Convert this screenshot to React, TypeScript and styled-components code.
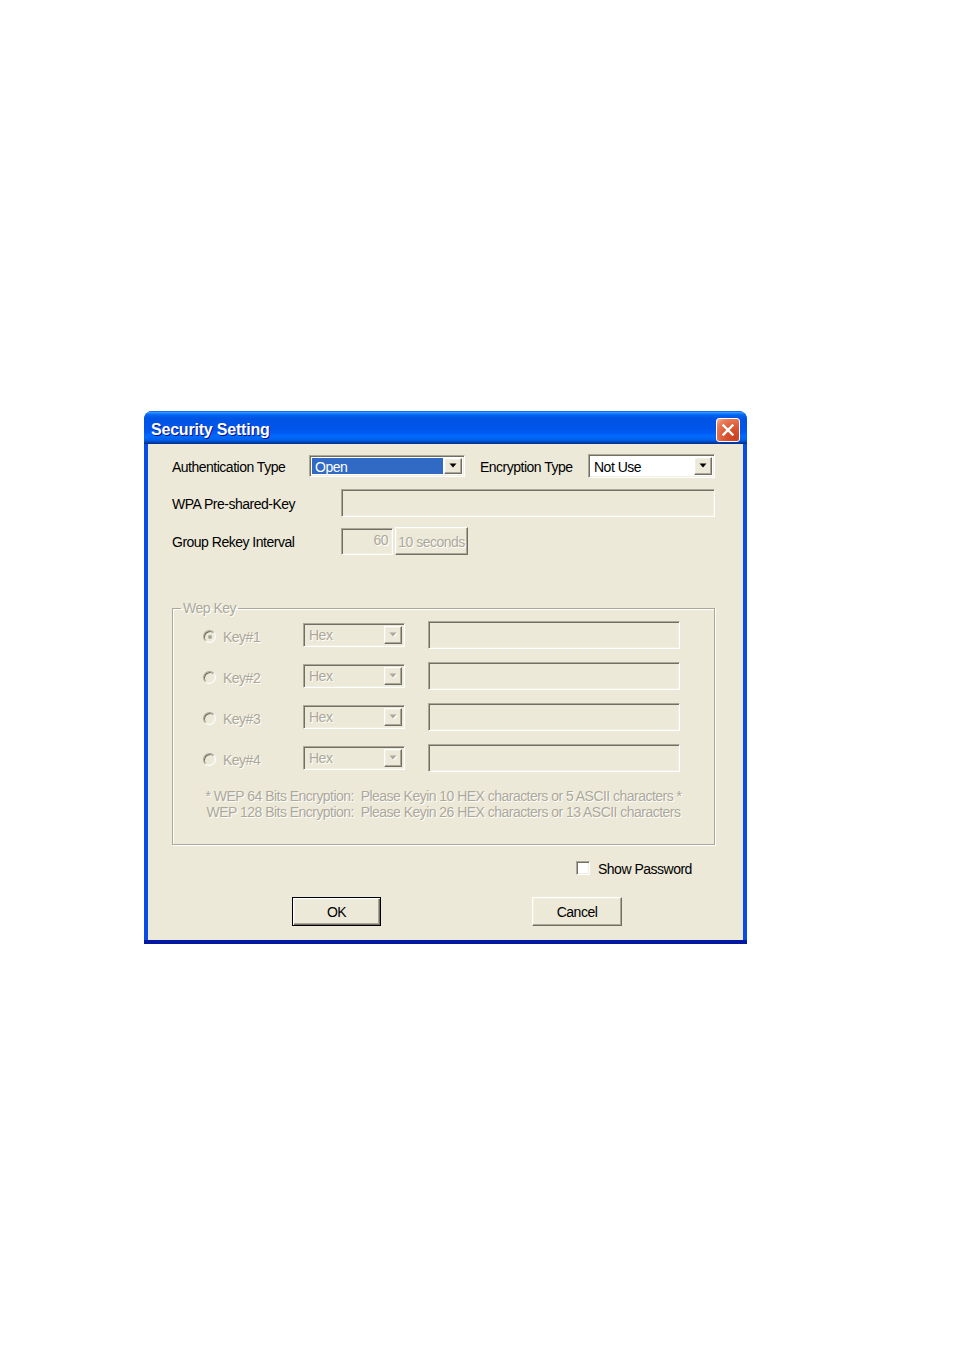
import styled, { createGlobalStyle } from "styled-components";

const GlobalStyle = createGlobalStyle`
  html, body {
    margin: 0;
    padding: 0;
    background: #ffffff;
  }
  body {
    font-family: "Liberation Sans", Arial, sans-serif;
  }
  * {
    box-sizing: border-box;
  }
`;

const sunken = `
  border: 1px solid;
  border-color: #aca899 #ffffff #ffffff #aca899;
  box-shadow: inset 1px 1px 0 #716f64, inset -1px -1px 0 #f1efe2;
`;

const raised = `
  border: 1px solid;
  border-color: #ffffff #716f64 #716f64 #ffffff;
  box-shadow: inset -1px -1px 0 #aca899, inset 1px 1px 0 #f1efe2;
`;

const Page = styled.div`
  padding: 411px 0 0 144px;
  height: 1350px;
`;

const Window = styled.div`
  width: 603px;
  height: 533px;
  border-radius: 8px 8px 0 0;
  padding: 0 4px 4px 4px;
  background: linear-gradient(
    to bottom,
    #0a4de2 calc(100% - 4px),
    #0019a0 calc(100% - 4px)
  );
  display: flex;
  flex-direction: column;
  overflow: hidden;
`;

const TitleBar = styled.div`
  height: 34px;
  margin: 0 -4px;
  padding: 0 7px 0 7px;
  display: flex;
  align-items: center;
  justify-content: space-between;
  border-radius: 8px 8px 0 0;
  background: linear-gradient(
    to bottom,
    #0058ee 0%,
    #3593ff 4%,
    #288eff 6%,
    #127dff 8%,
    #036ffc 10%,
    #0262ee 14%,
    #0057e5 20%,
    #0054e3 24%,
    #0055eb 56%,
    #005bf5 66%,
    #026afe 76%,
    #0062ef 86%,
    #0052d6 92%,
    #0040ab 94%,
    #003092 100%
  );
`;

const Title = styled.span`
  color: #ffffff;
  font-weight: bold;
  font-size: 16px;
  letter-spacing: -0.2px;
  text-shadow: 1px 1px 0 #0f1089;
  padding-top: 5px;
`;

const CloseButton = styled.div`
  width: 24px;
  height: 24px;
  margin-top: 4px;
  border: 1px solid #ffffff;
  border-radius: 3px;
  background: radial-gradient(
    circle at 80% 85%,
    #c8401f 0%,
    #dc5a36 45%,
    #e8805e 80%,
    #f6c2ae 100%
  );
  display: flex;
  align-items: center;
  justify-content: center;
`;

const Body = styled.div`
  flex: 1;
  background: #ece9d8;
  padding: 11px 28px 14px 24px;
  color: #000000;
  font-size: 14px;
  letter-spacing: -0.5px;
`;

const Row = styled.div<{ $gap: number; $h: number }>`
  display: flex;
  align-items: center;
  height: ${(p) => p.$h}px;
  margin-top: ${(p) => p.$gap}px;
`;

const Label = styled.span<{ $w: number; $ml?: number }>`
  width: ${(p) => p.$w}px;
  margin-left: ${(p) => p.$ml ?? 0}px;
  padding-top: 2px;
  flex-shrink: 0;
  white-space: nowrap;
`;

const SelectBox = styled.div<{ $w: number; $h: number; $bg: string }>`
  ${sunken}
  width: ${(p) => p.$w}px;
  height: ${(p) => p.$h}px;
  background: ${(p) => p.$bg};
  padding: 2px;
  display: flex;
  align-items: stretch;
  flex-shrink: 0;
`;

const SelectValue = styled.div<{ $selected?: boolean; $disabled?: boolean }>`
  flex: 1;
  display: flex;
  align-items: center;
  padding: 1px 0 0 3px;
  margin-right: 1px;
  white-space: nowrap;
  background: ${(p) => (p.$selected ? "#316ac5" : "transparent")};
  color: ${(p) => (p.$selected ? "#ffffff" : p.$disabled ? "#aca899" : "#000000")};
  text-shadow: ${(p) => (p.$disabled ? "1px 1px 0 #ffffff" : "none")};
`;

const ArrowButton = styled.div`
  ${raised}
  width: 18px;
  background: #ece9d8;
  display: flex;
  align-items: center;
  justify-content: center;
`;

const TextField = styled.div<{ $w: number; $h: number; $ml?: number }>`
  ${sunken}
  width: ${(p) => p.$w}px;
  height: ${(p) => p.$h}px;
  margin-left: ${(p) => p.$ml ?? 0}px;
  background: #ece9d8;
  flex-shrink: 0;
  color: #aca899;
  text-shadow: 1px 1px 0 #ffffff;
  text-align: right;
  padding: 3px 4px 0 0;
`;

const Button = styled.div<{ $w: number; $h: number; $default?: boolean; $disabled?: boolean; $ml?: number }>`
  width: ${(p) => p.$w}px;
  height: ${(p) => p.$h}px;
  margin-left: ${(p) => p.$ml ?? 0}px;
  padding-top: 1px;
  flex-shrink: 0;
  display: flex;
  align-items: center;
  justify-content: center;
  white-space: nowrap;
  background: #ece9d8;
  color: ${(p) => (p.$disabled ? "#aca899" : "#000000")};
  text-shadow: ${(p) => (p.$disabled ? "1px 1px 0 #ffffff" : "none")};
  ${(p) =>
    p.$default
      ? `border: 1px solid #000000;
         box-shadow: inset 1px 1px 0 #ffffff, inset -1px -1px 0 #716f64, inset -2px -2px 0 #aca899, inset 2px 2px 0 #f1efe2;`
      : `border: 1px solid;
         border-color: #ffffff #716f64 #716f64 #ffffff;
         box-shadow: inset -1px -1px 0 #aca899, inset 1px 1px 0 #f1efe2;`}
`;

const GroupBox = styled.fieldset`
  width: 543px;
  margin: 45px 0 0 0;
  padding: 0 0 24px 0;
  border: 1px solid #aca899;
  box-shadow: inset 1px 1px 0 #ffffff, 1px 1px 0 #ffffff;
  min-width: 0;
`;

const Legend = styled.legend`
  margin-left: 8px;
  padding: 0 2px;
  line-height: 16px;
  color: #aca899;
  text-shadow: 1px 1px 0 #ffffff;
`;

const KeyList = styled.div`
  margin-top: -2px;
`;

const KeyRow = styled.div`
  height: 41px;
  display: flex;
  align-items: center;
  padding-left: 30px;
`;

const Radio = styled.div<{ $checked?: boolean }>`
  width: 13px;
  height: 13px;
  margin-top: 4px;
  border-radius: 50%;
  border: 1px solid;
  border-color: #aca899 #ffffff #ffffff #aca899;
  box-shadow: inset 1px 1px 0 #716f64, inset -1px -1px 0 #f1efe2;
  background: #ece9d8;
  flex-shrink: 0;
  display: flex;
  align-items: center;
  justify-content: center;
  &::after {
    content: "";
    display: ${(p) => (p.$checked ? "block" : "none")};
    width: 4px;
    height: 4px;
    border-radius: 50%;
    background: #aca899;
  }
`;

const KeyLabel = styled.span`
  width: 80px;
  margin-left: 7px;
  margin-top: 4px;
  color: #aca899;
  text-shadow: 1px 1px 0 #ffffff;
`;

const Notes = styled.div`
  margin-top: 10px;
  text-align: center;
  line-height: 16px;
  font-size: 14px;
  letter-spacing: -0.53px;
  color: #aca899;
  text-shadow: 1px 1px 0 #ffffff;
  white-space: pre;
`;

const CheckRow = styled.div`
  margin-top: 16px;
  height: 14px;
  display: flex;
  align-items: center;
  padding-left: 404px;
  gap: 8px;
`;

const CheckBox = styled.div`
  ${sunken}
  width: 14px;
  height: 14px;
  background: #ffffff;
`;

const CheckText = styled.span`
  padding-top: 2px;
`;

const ButtonRow = styled.div`
  margin-top: 22px;
  display: flex;
  padding-left: 120px;
  gap: 151px;
`;

function Arrow({ disabled }: { disabled?: boolean }) {
  return (
    <svg width="9" height="6" viewBox="0 0 9 6">
      {disabled && <path d="M1.5 1.5h7L5 5.5z" fill="#ffffff" />}
      <path d="M0.5 0.5h7L4 4.5z" fill={disabled ? "#aca899" : "#000000"} />
    </svg>
  );
}

function CloseIcon() {
  return (
    <svg width="14" height="14" viewBox="0 0 14 14">
      <path
        d="M2.5 2.5L11.5 11.5M11.5 2.5L2.5 11.5"
        stroke="#ffffff"
        strokeWidth="2.4"
        strokeLinecap="square"
      />
    </svg>
  );
}

const keys = ["Key#1", "Key#2", "Key#3", "Key#4"];

export default function App() {
  return (
    <>
      <GlobalStyle />
      <Page>
        <Window>
          <TitleBar>
            <Title>Security Setting</Title>
            <CloseButton>
              <CloseIcon />
            </CloseButton>
          </TitleBar>
          <Body>
            <Row $gap={0} $h={22}>
              <Label $w={137}>Authentication Type</Label>
              <SelectBox $w={156} $h={22} $bg="#ffffff">
                <SelectValue $selected>Open</SelectValue>
                <ArrowButton>
                  <Arrow />
                </ArrowButton>
              </SelectBox>
              <Label $w={108} $ml={15}>Encryption Type</Label>
              <SelectBox $w={127} $h={24} $bg="#ffffff">
                <SelectValue>Not Use</SelectValue>
                <ArrowButton>
                  <Arrow />
                </ArrowButton>
              </SelectBox>
            </Row>
            <Row $gap={12} $h={28}>
              <Label $w={169}>WPA Pre-shared-Key</Label>
              <TextField $w={374} $h={28} />
            </Row>
            <Row $gap={10} $h={28}>
              <Label $w={169}>Group Rekey Interval</Label>
              <TextField $w={52} $h={27}>60</TextField>
              <Button $w={73} $h={28} $ml={2} $disabled>
                10 seconds
              </Button>
            </Row>
            <GroupBox>
              <Legend>Wep Key</Legend>
              <KeyList>
                {keys.map((k, i) => (
                  <KeyRow key={k}>
                    <Radio $checked={i === 0} />
                    <KeyLabel>{k}</KeyLabel>
                    <SelectBox $w={102} $h={24} $bg="#ece9d8">
                      <SelectValue $disabled>Hex</SelectValue>
                      <ArrowButton>
                        <Arrow disabled />
                      </ArrowButton>
                    </SelectBox>
                    <TextField $w={252} $h={28} $ml={23} />
                  </KeyRow>
                ))}
              </KeyList>
              <Notes>
                {"* WEP 64 Bits Encryption:  Please Keyin 10 HEX characters or 5 ASCII characters *\nWEP 128 Bits Encryption:  Please Keyin 26 HEX characters or 13 ASCII characters"}
              </Notes>
            </GroupBox>
            <CheckRow>
              <CheckBox />
              <CheckText>Show Password</CheckText>
            </CheckRow>
            <ButtonRow>
              <Button $w={89} $h={29} $default>
                OK
              </Button>
              <Button $w={90} $h={29}>
                Cancel
              </Button>
            </ButtonRow>
          </Body>
        </Window>
      </Page>
    </>
  );
}
